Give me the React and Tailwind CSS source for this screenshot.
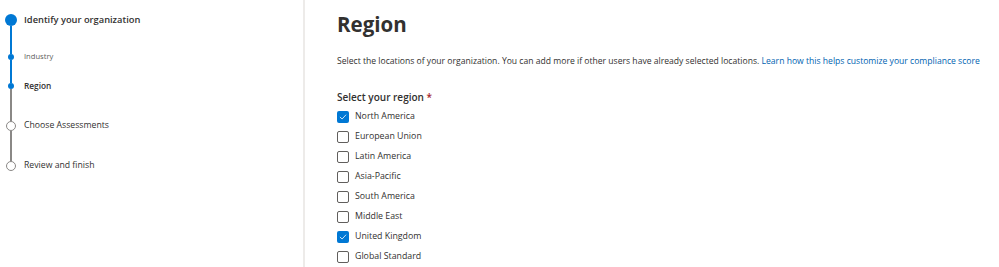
const regions = [
    { label: 'North America', checked: true },
    { label: 'European Union', checked: false },
    { label: 'Latin America', checked: false },
    { label: 'Asia-Pacific', checked: false },
    { label: 'South America', checked: false },
    { label: 'Middle East', checked: false },
    { label: 'United Kingdom', checked: true },
    { label: 'Global Standard', checked: false },
];

const Line = ({ h, active }) => (
    <div className={`w-[22px] flex justify-center ${h}`}>
        <div className={`w-[2px] h-full ${active ? 'bg-[#0078d4]' : 'bg-[#8a8886]'}`}></div>
    </div>
);

const Checkbox = ({ checked }) => (
    checked ? (
        <div className="w-[12px] h-[12px] rounded-[2px] bg-[#0078d4] flex items-center justify-center">
            <svg width="8" height="8" viewBox="0 0 8 8" fill="none">
                <path d="M1.2 4.2 L3.1 6 L6.8 2" stroke="white" strokeWidth="0.8" strokeLinecap="round" strokeLinejoin="round" />
            </svg>
        </div>
    ) : (
        <div className="w-[12px] h-[12px] rounded-[2px] border border-[#605e5c] bg-white"></div>
    )
);

const App = () => {
    return (
        <div className="w-[999px] h-[267px] bg-white flex overflow-hidden text-[#323130]" style={{ fontFamily: '"Open Sans", "Noto Sans", sans-serif' }}>
            {/* Stepper */}
            <div className="w-[303px] shrink-0 pt-[14px]">
                <div className="flex items-center h-[12px]">
                    <div className="w-[22px] flex justify-center">
                        <div className="w-[12px] h-[12px] rounded-full bg-[#0078d4]"></div>
                    </div>
                    <span className="ml-[2px] text-[9.3px] font-semibold whitespace-nowrap">Identify your organization</span>
                </div>
                <Line h="h-[28px]" active />
                <div className="flex items-center h-[6px]">
                    <div className="w-[22px] flex justify-center">
                        <div className="w-[6px] h-[6px] rounded-full bg-[#0078d4]"></div>
                    </div>
                    <span className="ml-[2px] text-[7.6px] text-[#605e5c] whitespace-nowrap">Industry</span>
                </div>
                <Line h="h-[23px]" active />
                <div className="flex items-center h-[6px]">
                    <div className="w-[22px] flex justify-center">
                        <div className="w-[6px] h-[6px] rounded-full bg-[#0078d4]"></div>
                    </div>
                    <span className="ml-[2px] text-[8.3px] font-semibold whitespace-nowrap">Region</span>
                </div>
                <Line h="h-[32px]" />
                <div className="flex items-center h-[10px]">
                    <div className="w-[22px] flex justify-center">
                        <div className="w-[10px] h-[10px] rounded-full border border-[#8a8886]"></div>
                    </div>
                    <span className="ml-[2px] text-[8.7px] text-[#323130] whitespace-nowrap">Choose Assessments</span>
                </div>
                <Line h="h-[30px]" />
                <div className="flex items-center h-[10px]">
                    <div className="w-[22px] flex justify-center">
                        <div className="w-[10px] h-[10px] rounded-full border border-[#8a8886]"></div>
                    </div>
                    <span className="ml-[2px] text-[8.7px] text-[#323130] whitespace-nowrap">Review and finish</span>
                </div>
            </div>

            {/* Divider */}
            <div className="w-[2px] h-full bg-[#edebe9] shrink-0"></div>

            {/* Content */}
            <div className="pl-[32px] pt-[8px] flex-1 min-w-0">
                <h1 className="text-[20.5px] font-bold leading-[32px] text-[#323130]">Region</h1>
                <p className="mt-[15px] text-[8.6px] leading-[12px] whitespace-nowrap">
                    Select the locations of your organization. You can add more if other users have already selected locations.{' '}
                    <span className="text-[#0063b1]">Learn how this helps customize your compliance score</span>
                </p>
                <div className="mt-[23px] text-[10px] font-semibold leading-[14px]">
                    Select your region <span className="text-[#a4262c]">*</span>
                </div>
                <div className="mt-[3px] flex flex-col">
                    {regions.map((r) => (
                        <div key={r.label} className="flex items-center h-[20px] gap-[6px]">
                            <Checkbox checked={r.checked} />
                            <span className="text-[8.8px]">{r.label}</span>
                        </div>
                    ))}
                </div>
            </div>
        </div>
    );
};

export default App;
